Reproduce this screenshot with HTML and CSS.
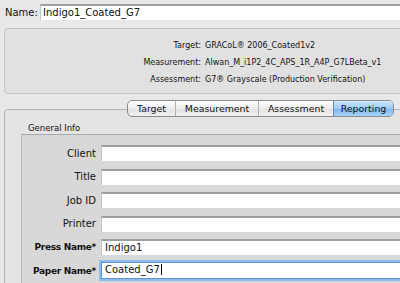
FILE: index.html
```html
<!DOCTYPE html>
<html lang="en">
<head>
    <meta charset="UTF-8">
    <title>Job Setup</title>
    <link rel="stylesheet" href="styles.css">
</head>
<body>
    <div id="name-row">
        <span class="name-label">Name:</span>
        <div class="field name-field">Indigo1_Coated_G7</div>
    </div>

    <div id="summary">
        <div class="summary-row">
            <span class="summary-label">Target:</span>
            <span class="summary-value">GRACoL&reg; 2006_Coated1v2</span>
        </div>
        <div class="summary-row">
            <span class="summary-label">Measurement:</span>
            <span class="summary-value">Alwan_M_i1P2_4C_APS_1R_A4P_G7LBeta_v1</span>
        </div>
        <div class="summary-row">
            <span class="summary-label">Assessment:</span>
            <span class="summary-value">G7&reg; Grayscale (Production Verification)</span>
        </div>
    </div>

    <div id="tabs">
        <div class="tab tab-target">Target</div>
        <div class="tab tab-measurement">Measurement</div>
        <div class="tab tab-assessment">Assessment</div>
        <div class="tab tab-reporting selected">Reporting</div>
    </div>

    <div id="details">
        <div class="group-title">General Info</div>
        <div id="general">
            <div class="form-row">
                <label>Client</label>
                <div class="field"></div>
            </div>
            <div class="form-row">
                <label>Title</label>
                <div class="field"></div>
            </div>
            <div class="form-row">
                <label>Job ID</label>
                <div class="field"></div>
            </div>
            <div class="form-row">
                <label>Printer</label>
                <div class="field"></div>
            </div>
            <div class="form-row">
                <label class="required">Press Name*</label>
                <div class="field">Indigo1</div>
            </div>
            <div class="form-row">
                <label class="required">Paper Name*</label>
                <div class="field focused"><span class="caret">Coated_G7</span></div>
            </div>
        </div>
    </div>
</body>
</html>
```

FILE: styles.css
```css
html,body{
    height:283px;
    overflow:hidden;
}
body{
    margin:0;
    background-color:#e8e8e8;
    font-family:"DejaVu Sans", sans-serif;
    color:#111;
}

#name-row{
    display:flex;
    align-items:center;
    padding:4px 0 0 5px;
    margin-right:-20px;
}
.name-label{
    width:35px;
    font-size:10px;
}
.field{
    flex:1;
    height:14px;
    border-top:2px solid #9f9f9f;
    border-left:1px solid #c6c6c6;
    background-color:#fff;
    font-size:10px;
    line-height:14px;
    padding-left:3px;
}
.name-field{
    padding-left:2px;
}

#summary{
    margin:8px -20px 0 4px;
    height:66px;
    padding-top:8px;
    box-sizing:border-box;
    border:1px solid #c4c4c4;
    border-radius:4px;
    background-color:#e1e1e1;
}
.summary-row{
    display:flex;
    height:17px;
    font-size:8px;
    line-height:17px;
}
.summary-label{
    width:200px;
    text-align:right;
    padding-right:4px;
    box-sizing:border-box;
}

#tabs{
    display:flex;
    position:relative;
    z-index:1;
    width:267px;
    height:17px;
    margin:6px 0 -8px 127px;
    box-sizing:border-box;
    border:1px solid #8c8c8c;
    border-radius:5px;
    overflow:hidden;
    background:linear-gradient(#ffffff, #ececec 50%, #e2e2e2 51%, #f0f0f0);
}
.tab{
    font-size:9.4px;
    line-height:15px;
    text-align:center;
    border-left:1px solid #b0b0b0;
}
.tab-target{ width:47px; border-left:0; }
.tab-measurement{ width:82px; }
.tab-assessment{ width:74px; }
.tab-reporting{ flex:1; }
.selected{
    border-left-color:#5b8fc8;
    background:linear-gradient(#cfe6fc, #9ccbf6 50%, #7cb8f0 51%, #a8d4fb);
}

#details{
    margin:0 -20px 0 4px;
    height:190px;
    border:1px solid #b3b3b3;
    border-radius:4px;
    background-color:#e4e4e4;
}
.group-title{
    margin:12px 0 0 23px;
    font-size:8.5px;
    line-height:12px;
}
#general{
    margin:0 0 0 16px;
    padding-top:10px;
    border-top:1px solid #a9a9a9;
    border-left:1px solid #bdbdbd;
    background-color:#d8d8d8;
    height:170px;
}
.form-row{
    display:flex;
    align-items:center;
    height:16px;
    margin-bottom:7.5px;
}
.form-row label{
    width:74px;
    text-align:right;
    padding-right:5px;
    font-size:10px;
}
.form-row .required{
    font-weight:bold;
    font-size:9px;
    letter-spacing:-0.3px;
}
.focused{
    height:15px;
    border:1px solid #5d93cf;
    box-shadow:0 0 0 2px #8dbbea;
}
.caret{
    border-right:1px solid #000;
    padding-right:1px;
}
```
